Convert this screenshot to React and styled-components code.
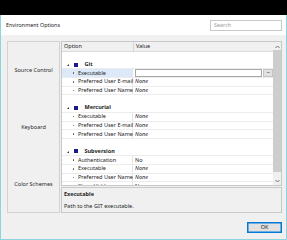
import React from "react";
import styled, { createGlobalStyle } from "styled-components";

const Global = createGlobalStyle`
  html, body {
    margin: 0;
    padding: 0;
    background: #ffffff;
  }
  body {
    font-family: "Noto Sans", "Open Sans", sans-serif;
    font-size: 5.5px;
    color: #1e1e1e;
  }
`;

const Window = styled.div`
  width: 287px;
  height: 240px;
  display: flex;
  flex-direction: column;
  box-sizing: border-box;
`;

const TitleBar = styled.div`
  height: 15px;
  background: #000000;
  flex-shrink: 0;
`;

const Frame = styled.div`
  flex: 1;
  display: flex;
  flex-direction: column;
  background: #f0f0f0;
  border: 1px solid #8ad5de;
  border-top: none;
  min-height: 0;
`;

const Header = styled.div`
  height: 20px;
  background: #ffffff;
  display: flex;
  align-items: center;
  justify-content: space-between;
  padding: 0 4px 0 5px;
  flex-shrink: 0;
`;

const Title = styled.div`
  font-size: 5.4px;
  color: #1e1e1e;
`;

const Search = styled.div`
  width: 67px;
  height: 9px;
  border: 1px solid #c8c8c8;
  background: #ffffff;
  color: #9a9a9a;
  font-size: 5.4px;
  line-height: 9px;
  padding-left: 3px;
  margin-top: 1px;
`;

const Body = styled.div`
  display: flex;
  gap: 1px;
  padding: 6px 4px 0 6px;
  height: 172px;
  flex-shrink: 0;
`;

const Sidebar = styled.div`
  width: 51px;
  border: 1px solid #d2d2d2;
  display: flex;
  flex-direction: column;
`;

const Category = styled.div`
  flex: 1;
  display: flex;
  align-items: center;
  justify-content: center;
  color: #2a2a2a;
`;

const Main = styled.div`
  flex: 1;
  display: flex;
  flex-direction: column;
  gap: 1px;
`;

const Grid = styled.div`
  height: 143px;
  border: 1px solid #c8c8c8;
  background: #ffffff;
  display: flex;
  overflow: hidden;
`;

const GridContent = styled.div`
  flex: 1;
  display: flex;
  flex-direction: column;
  overflow: hidden;
`;

const HeaderRow = styled.div`
  display: flex;
  height: 9px;
  background: #f0f0f0;
  border-bottom: 1px solid #dadada;
  flex-shrink: 0;
`;

const HeadCell = styled.div`
  width: ${({ $w }) => ($w ? `${$w}px` : "auto")};
  flex: ${({ $w }) => ($w ? "none" : 1)};
  line-height: 9px;
  padding-left: 2px;
  box-sizing: border-box;
  border-right: ${({ $w }) => ($w ? "1px solid #d6d6d6" : "none")};
`;

const Row = styled.div`
  display: flex;
  height: 8.7px;
  flex-shrink: 0;
  box-sizing: border-box;
  border-bottom: ${({ $line }) => ($line ? "1px solid #ececec" : "none")};
  line-height: 7px;
`;

const NameCell = styled.div`
  width: 71px;
  flex-shrink: 0;
  display: flex;
  align-items: center;
  padding-left: ${({ $group }) => ($group ? "5px" : "10.5px")};
  box-sizing: border-box;
  background: ${({ $selected }) => ($selected ? "#dde8f8" : "transparent")};
  border-right: ${({ $group }) => ($group ? "none" : "1px solid #e4e4e4")};
  white-space: nowrap;
  font-weight: ${({ $group }) => ($group ? 700 : 400)};
`;

const Bullet = styled.span`
  width: 1.5px;
  height: 1.5px;
  border-radius: 50%;
  background: #555;
  margin-right: 4px;
  flex-shrink: 0;
`;

const Expander = styled.span`
  width: 0;
  height: 0;
  border-left: 2.5px solid transparent;
  border-bottom: 2.5px solid #333;
  margin-right: 4.5px;
  margin-top: 1px;
`;

const GroupIcon = styled.span`
  width: 4px;
  height: 4px;
  background: #1a1a8c;
  margin-right: 7px;
`;

const ValueCell = styled.div`
  flex: 1;
  display: flex;
  align-items: center;
  padding-left: 2px;
  font-style: ${({ $italic }) => ($italic ? "italic" : "normal")};
  color: #1e1e1e;
`;

const EditBox = styled.div`
  flex: 1;
  height: 6px;
  border: 1px solid #a8a8a8;
  background: #fff;
`;

const DotsButton = styled.div`
  width: 8px;
  height: 6px;
  background: #e1e1e1;
  border: 1px solid #c4c4c4;
  margin-left: 1px;
  font-size: 5px;
  line-height: 3px;
  text-align: center;
  letter-spacing: -0.5px;
`;

const Scrollbar = styled.div`
  width: 8px;
  background: #f0f0f0;
  display: flex;
  flex-direction: column;
  align-items: center;
  padding: 1px 0;
  box-sizing: border-box;
`;

const ScrollArrow = styled.div`
  height: 7px;
  width: 8px;
  display: flex;
  align-items: center;
  justify-content: center;
`;

const Thumb = styled.div`
  width: 8px;
  height: 122px;
  background: #cdcdcd;
`;

const ScrollGap = styled.div`
  flex: 1;
`;

const Desc = styled.div`
  flex: 1;
  border: 1px solid #c8c8c8;
  background: #f0f0f0;
  padding: 2px 2px;
  display: flex;
  flex-direction: column;
  justify-content: space-between;
`;

const DescTitle = styled.div`
  font-weight: 700;
  line-height: 8px;
`;

const DescText = styled.div`
  line-height: 8px;
`;

const Footer = styled.div`
  flex: 1;
  display: flex;
  justify-content: flex-end;
  align-items: center;
  padding: 0 4px 0 0;
`;

const OkButton = styled.div`
  width: 33px;
  height: 9px;
  border: 1px solid #0078d7;
  box-shadow: inset 0 0 0 0.5px #0078d7;
  background: #e1e1e1;
  text-align: center;
  line-height: 9px;
  font-size: 5.5px;
  margin-top: 2px;
`;

const groups = [
  {
    name: "Git",
    props: [
      { name: "Executable", edit: true },
      { name: "Preferred User E-mail", value: "None", italic: true },
      { name: "Preferred User Name", value: "None", italic: true },
    ],
  },
  {
    name: "Mercurial",
    props: [
      { name: "Executable", value: "None", italic: true },
      { name: "Preferred User E-mail", value: "None", italic: true },
      { name: "Preferred User Name", value: "None", italic: true },
    ],
  },
  {
    name: "Subversion",
    props: [
      { name: "Authentication", value: "No" },
      { name: "Executable", value: "None", italic: true },
      { name: "Preferred User Name", value: "None", italic: true },
      { name: "Show Hidden", value: "No" },
    ],
  },
];

const Arrow = ({ down }) => (
  <svg width="5" height="4" viewBox="0 0 5 4">
    <path
      d={down ? "M0.5 1 L2.5 3 L4.5 1" : "M0.5 3 L2.5 1 L4.5 3"}
      fill="none"
      stroke="#606060"
      strokeWidth="0.9"
    />
  </svg>
);

export default function App() {
  return (
    <>
      <Global />
      <Window>
        <TitleBar />
        <Frame>
          <Header>
            <Title>Environment Options</Title>
            <Search>Search</Search>
          </Header>
          <Body>
            <Sidebar>
              <Category>Source Control</Category>
              <Category>Keyboard</Category>
              <Category>Color Schemes</Category>
            </Sidebar>
            <Main>
              <Grid>
                <GridContent>
                  <HeaderRow>
                    <HeadCell $w={72}>Option</HeadCell>
                    <HeadCell>Value</HeadCell>
                  </HeaderRow>
                  {groups.map((g) => (
                    <React.Fragment key={g.name}>
                      <Row />
                      <Row $line>
                        <NameCell $group>
                          <Expander />
                          <GroupIcon />
                          {g.name}
                        </NameCell>
                      </Row>
                      {g.props.map((p) => (
                        <Row $line key={g.name + p.name}>
                          <NameCell $selected={p.edit}>
                            <Bullet />
                            {p.name}
                          </NameCell>
                          <ValueCell $italic={p.italic}>
                            {p.edit ? (
                              <>
                                <EditBox />
                                <DotsButton>...</DotsButton>
                              </>
                            ) : (
                              p.value
                            )}
                          </ValueCell>
                        </Row>
                      ))}
                    </React.Fragment>
                  ))}
                </GridContent>
                <Scrollbar>
                  <ScrollArrow>
                    <Arrow />
                  </ScrollArrow>
                  <Thumb />
                  <ScrollGap />
                  <ScrollArrow>
                    <Arrow down />
                  </ScrollArrow>
                </Scrollbar>
              </Grid>
              <Desc>
                <DescTitle>Executable</DescTitle>
                <DescText>Path to the GIT executable.</DescText>
              </Desc>
            </Main>
          </Body>
          <Footer>
            <OkButton>OK</OkButton>
          </Footer>
        </Frame>
      </Window>
    </>
  );
}
